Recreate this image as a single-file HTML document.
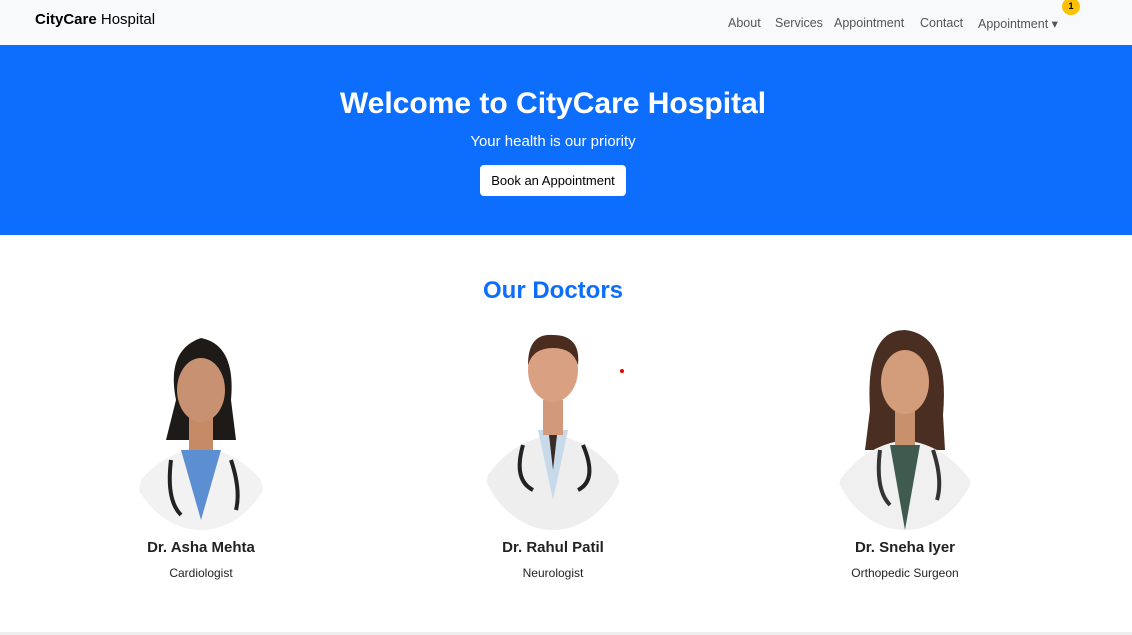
<!DOCTYPE html>
<html><head><style>
*{margin:0;padding:0;box-sizing:border-box}
body{width:1132px;height:635px;font-family:"Liberation Sans",sans-serif;background:#fff;position:relative;overflow:hidden}
nav{height:45px;background:#f8f9fa;position:relative}
.brand{position:absolute;left:35px;top:11px;font-size:15px;color:#000}
.links{position:absolute;top:16px;font-size:12.5px;color:#555}
.links span{position:absolute;white-space:nowrap}
.badge{position:absolute;left:1062px;top:-2px;width:18px;height:17px;border-radius:9px;background:#ffc107;font-size:9px;font-weight:bold;text-align:center;line-height:17px;color:#000}
.hero{position:absolute;top:45px;left:0;width:1106px;height:190px;color:#fff;text-align:center}
.herobg{position:absolute;top:45px;left:0;width:1132px;height:190px;background:#0d6efd}
.hero h1{position:absolute;top:42px;width:100%;font-size:30px;font-weight:bold}
.hero p{position:absolute;top:88px;width:100%;font-size:15px}
.btn{position:absolute;left:480px;top:120px;width:146px;height:31px;background:#fff;border-radius:4px;color:#000;font-size:13px;line-height:31px}
h2{position:absolute;top:277px;width:1106px;text-align:center;color:#0d6efd;font-size:24px;font-weight:bold}
.doc{position:absolute;top:330px;width:200px;text-align:center}
.doc svg{display:block;margin:0 auto}
.doc .n{position:absolute;top:209px;width:100%;font-size:15px;font-weight:bold;color:#222}
.doc .s{position:absolute;top:236px;width:100%;font-size:12px;color:#222}
.foot{position:absolute;top:632px;left:0;width:1132px;height:3px;background:#eee}
</style></head><body>
<nav><div class="brand"><b>CityCare</b> Hospital</div>
<div class="links"><span style="left:728px">About</span><span style="left:775px">Services</span><span style="left:834px">Appointment</span><span style="left:920px">Contact</span><span style="left:978px">Appointment &#9662;</span></div>
<div class="badge">1</div></nav>
<div class="herobg"></div>
<div class="hero"><h1>Welcome to CityCare Hospital</h1><p>Your health is our priority</p><div class="btn">Book an Appointment</div></div>
<h2>Our Doctors</h2>

<div class="doc" style="left:101px">
<svg width="160" height="200" viewBox="0 0 160 200"><defs><clipPath id="c1"><ellipse cx="80" cy="100" rx="78" ry="100"/></clipPath></defs><g clip-path="url(#c1)">
<path d="M55 70 Q45 20 80 8 Q115 15 110 70 L115 110 L45 110Z" fill="#1e1a18"/>
<path d="M10 200 L20 150 Q40 125 80 115 Q120 125 140 150 L150 200Z" fill="#f2f2f2"/>
<path d="M60 120 L80 190 L100 120Z" fill="#5b8fd1"/>
<rect x="68" y="85" width="24" height="35" fill="#c58a66"/>
<ellipse cx="80" cy="60" rx="24" ry="32" fill="#c89272"/>
<path d="M50 130 Q45 170 60 185 M110 130 Q120 160 115 180" stroke="#222" stroke-width="4" fill="none"/></g></svg>
<div class="n">Dr. Asha Mehta</div><div class="s">Cardiologist</div></div>

<div class="doc" style="left:453px">
<svg width="160" height="200" viewBox="0 0 160 200"><defs><clipPath id="c2"><ellipse cx="80" cy="100" rx="78" ry="100"/></clipPath></defs><g clip-path="url(#c2)">
<path d="M5 200 L15 145 Q40 110 80 105 Q120 110 145 145 L155 200Z" fill="#eeeeee"/>
<path d="M65 100 L80 170 L95 100Z" fill="#c8d9ea"/>
<path d="M76 105 L80 140 L84 105Z" fill="#3a2b25"/>
<rect x="70" y="70" width="20" height="35" fill="#d29a7a"/>
<ellipse cx="80" cy="40" rx="25" ry="32" fill="#d9a181"/>
<path d="M55 35 Q55 3 80 5 Q108 5 105 35 Q100 18 80 18 Q60 18 55 35Z" fill="#4a2d1e"/>
<path d="M50 115 Q40 150 60 160 M110 115 Q125 150 105 160" stroke="#222" stroke-width="4" fill="none"/></g></svg>
<div class="n">Dr. Rahul Patil</div><div class="s">Neurologist</div></div>

<div class="doc" style="left:805px">
<svg width="160" height="200" viewBox="0 0 160 200"><defs><clipPath id="c3"><ellipse cx="80" cy="100" rx="78" ry="100"/></clipPath></defs><g clip-path="url(#c3)">
<path d="M45 80 Q40 0 80 0 Q125 5 118 85 L120 120 L40 120Z" fill="#4a2e22"/>
<path d="M5 200 L15 150 Q40 115 80 110 Q120 115 145 150 L155 200Z" fill="#f0f0f0"/>
<path d="M65 115 L80 200 L95 115Z" fill="#3f5a4f"/>
<rect x="70" y="80" width="20" height="35" fill="#c9906e"/>
<ellipse cx="80" cy="52" rx="24" ry="32" fill="#d39d7c"/>
<path d="M55 120 Q50 160 65 175 M108 120 Q118 150 112 170" stroke="#333" stroke-width="4" fill="none"/></g></svg>
<div class="n">Dr. Sneha Iyer</div><div class="s">Orthopedic Surgeon</div></div>

<div style="position:absolute;left:620px;top:369px;width:4px;height:4px;border-radius:2px;background:#e00"></div>
<div class="foot"></div>
</body></html>
